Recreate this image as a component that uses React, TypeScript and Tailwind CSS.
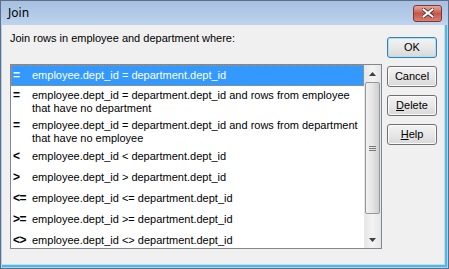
import React from 'react';

type Row = { op: string; lines: string[] };

const rows: Row[] = [
	{ op: '=', lines: ['employee.dept_id = department.dept_id'] },
	{
		op: '=',
		lines: ['employee.dept_id = department.dept_id and rows from employee', 'that have no department'],
	},
	{
		op: '=',
		lines: ['employee.dept_id = department.dept_id and rows from department', 'that have no employee'],
	},
	{ op: '<', lines: ['employee.dept_id < department.dept_id'] },
	{ op: '>', lines: ['employee.dept_id > department.dept_id'] },
	{ op: '<=', lines: ['employee.dept_id <= department.dept_id'] },
	{ op: '>=', lines: ['employee.dept_id >= department.dept_id'] },
	{ op: '<>', lines: ['employee.dept_id <> department.dept_id'] },
];

const Button = ({ label, under, primary }: { label: string; under?: boolean; primary?: boolean }) => {
	return (
		<button
			className={`flex h-[21px] w-[50px] items-center justify-center rounded-[3px] border bg-gradient-to-b from-[#f3f3f3] via-[#e8e8e8] to-[#d8d8d8] text-[11px] text-black ${
				primary ? 'border-[#3c7fb1] shadow-[inset_0_0_0_1px_#a8e2f8]' : 'border-[#707070] shadow-[inset_0_0_0_1px_#fbfbfb]'
			}`}
		>
			{under ? (
				<span>
					<span className="underline">{label[0]}</span>
					{label.slice(1)}
				</span>
			) : (
				label
			)}
		</button>
	);
};

const ListRow = ({ row, selected }: { row: Row; selected: boolean }) => {
	const double = row.lines.length > 1;
	return (
		<div
			className={`flex shrink-0 pl-[1px] ${double ? 'h-[30px] items-start pt-[2px]' : 'h-[21px] items-center'} ${
				selected ? 'border border-dotted border-[#c98a4a] bg-[#3399ff] text-white' : 'border border-transparent text-black'
			}`}
		>
			<div className="w-[19px] shrink-0 text-[12px] font-bold leading-[13px] tracking-[-0.5px]">{row.op}</div>
			<div className="leading-[13px]">
				{row.lines.map((l, i) => (
					<div key={i}>{l}</div>
				))}
			</div>
		</div>
	);
};

const ScrollBar = () => {
	return (
		<div className="flex w-[17px] shrink-0 flex-col bg-gradient-to-r from-[#e6e6e6] via-[#f3f3f3] to-[#e6e6e6]">
			<div className="flex h-[17px] items-center justify-center">
				<svg width="7" height="4" viewBox="0 0 7 4">
					<path d="M0 4 L3.5 0 L7 4 Z" fill="#404040" />
				</svg>
			</div>
			<div className="mx-[1px] flex h-[132px] items-center justify-center rounded-[2px] border border-[#979797] bg-gradient-to-r from-[#f1f1f1] via-[#e4e4e4] to-[#cfcfcf]">
				<div className="flex flex-col gap-[1px]">
					<div className="h-[1px] w-[7px] bg-[#7a7a7a]" />
					<div className="h-[1px] w-[7px] bg-[#7a7a7a]" />
					<div className="h-[1px] w-[7px] bg-[#7a7a7a]" />
				</div>
			</div>
			<div className="flex-1" />
			<div className="flex h-[17px] items-center justify-center">
				<svg width="7" height="4" viewBox="0 0 7 4">
					<path d="M0 0 L3.5 4 L7 0 Z" fill="#404040" />
				</svg>
			</div>
		</div>
	);
};

export default function App() {
	return (
		<div
			className="flex h-[269px] w-[449px] flex-col border border-[#5d6e86] bg-[#b7cde9] text-[11px]"
			style={{ fontFamily: '"Liberation Sans", Arial, sans-serif' }}
		>
			<div className="flex h-[24px] shrink-0 items-center justify-between bg-gradient-to-b from-[#a7c0e0] to-[#bdd3ee] pl-[7px] pr-[6px]">
				<span className="text-[12px] text-black" style={{ fontFamily: '"Noto Sans", "Open Sans", sans-serif' }}>
					Join
				</span>
				<div className="flex h-[17px] w-[29px] items-center justify-center rounded-[3px] border border-[#7b3a33] bg-gradient-to-b from-[#e8a99e] via-[#c7564a] to-[#d9806f]">
					<svg width="12" height="10" viewBox="0 0 12 10">
						<path d="M1.5 1.5 L10.5 8.5 M10.5 1.5 L1.5 8.5" stroke="#4a2a2a" strokeWidth="3.6" strokeLinecap="square" />
						<path d="M1.5 1.5 L10.5 8.5 M10.5 1.5 L1.5 8.5" stroke="#ffffff" strokeWidth="2" strokeLinecap="square" />
					</svg>
				</div>
			</div>
			<div className="mx-[1px] mb-[1px] flex flex-1 border-b-2 border-r-2 border-[#3ec0ee] bg-[#f0f0f0]">
				<div className="flex flex-1 border-b border-r border-[#d8d8d8] pl-[8px] pr-[7px]">
					<div className="flex flex-col pt-[7px]">
						<div className="h-[13px] leading-[13px]">Join rows in employee and department where:</div>
						<div className="mt-[19px] flex h-[185px] w-[372px] overflow-hidden border border-[#828790] bg-white">
							<div className="flex flex-1 flex-col overflow-hidden">
								{rows.map((r, i) => (
									<ListRow key={i} row={r} selected={i === 0} />
								))}
							</div>
							<ScrollBar />
						</div>
					</div>
					<div className="ml-auto flex flex-col gap-[8px] pt-[12px]">
						<Button label="OK" primary />
						<Button label="Cancel" />
						<Button label="Delete" under />
						<Button label="Help" under />
					</div>
				</div>
			</div>
		</div>
	);
}
